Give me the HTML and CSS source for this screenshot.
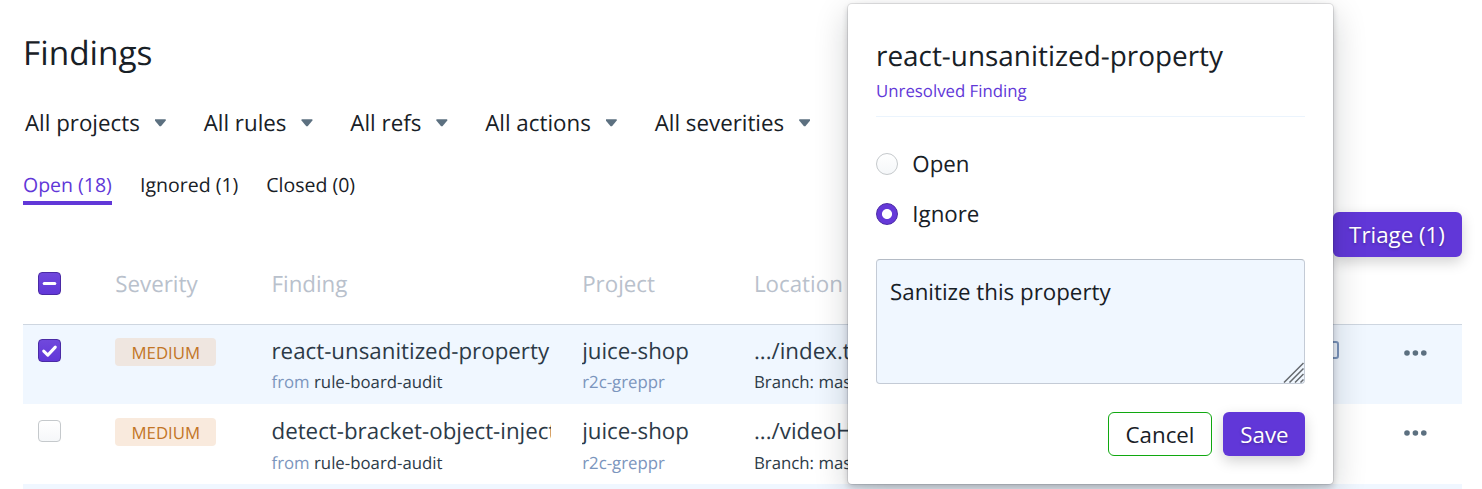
FILE: index.html
```html
<!DOCTYPE html>
<html lang="en">
<head>
<meta charset="utf-8">
<title>Findings</title>
<link rel="stylesheet" href="styles.css">
</head>
<body>
<main class="page">
  <h1 class="page-title">Findings</h1>
  <div class="filters">
    <div class="filter">All projects<i class="caret"></i></div>
    <div class="filter">All rules<i class="caret"></i></div>
    <div class="filter">All refs<i class="caret"></i></div>
    <div class="filter">All actions<i class="caret"></i></div>
    <div class="filter">All severities<i class="caret"></i></div>
  </div>
  <nav class="tabs">
    <a class="tab tab-active">Open (18)</a>
    <a class="tab">Ignored (1)</a>
    <a class="tab">Closed (0)</a>
  </nav>
  <div class="toolbar"><button class="btn btn-primary triage">Triage (1)</button></div>
  <section class="table">
    <div class="row head">
      <span class="check check-on"><svg viewBox="0 0 23 23"><path d="M6.2 11.5h10.6" stroke="#fff" stroke-width="3" stroke-linecap="round"/></svg></span>
      <span>Severity</span><span>Finding</span><span>Project</span><span>Location</span>
    </div>
    <div class="row item selected">
      <span class="check check-on"><svg viewBox="0 0 23 23"><path d="M5.7 12.1l4.1 4 7.5-8" fill="none" stroke="#fff" stroke-width="3" stroke-linecap="round" stroke-linejoin="round"/></svg></span>
      <span class="badge">MEDIUM</span>
      <div class="cell"><div class="main">react-unsanitized-property</div><div class="sub"><span class="muted">from</span> rule-board-audit</div></div>
      <div class="cell"><div class="main">juice-shop</div><div class="sub muted">r2c-greppr</div></div>
      <div class="cell"><div class="main">.../index.ts</div><div class="sub">Branch: master</div></div>
      <svg class="copy" viewBox="0 0 18 18"><rect x="1" y="1" width="16" height="16" rx="2" fill="none" stroke="#7b95bd" stroke-width="2"/></svg>
      <svg class="more" viewBox="0 0 23 6"><g fill="#5c7080"><circle cx="3" cy="3" r="2.8"/><circle cx="11.4" cy="3" r="2.8"/><circle cx="19.8" cy="3" r="2.8"/></g></svg>
    </div>
    <div class="row item second">
      <span class="check"></span>
      <span class="badge">MEDIUM</span>
      <div class="cell"><div class="main">detect-bracket-object-injection</div><div class="sub"><span class="muted">from</span> rule-board-audit</div></div>
      <div class="cell"><div class="main">juice-shop</div><div class="sub muted">r2c-greppr</div></div>
      <div class="cell"><div class="main">.../videoHandler.ts</div><div class="sub">Branch: master</div></div>
      <span></span>
      <svg class="more" viewBox="0 0 23 6"><g fill="#5c7080"><circle cx="3" cy="3" r="2.8"/><circle cx="11.4" cy="3" r="2.8"/><circle cx="19.8" cy="3" r="2.8"/></g></svg>
    </div>
    <div class="row item selected"></div>
  </section>
</main>
<aside class="popover">
  <h2 class="popover-title">react-unsanitized-property</h2>
  <div class="popover-sub">Unresolved Finding</div>
  <label class="option"><span class="radio"></span>Open</label>
  <label class="option"><span class="radio radio-on"></span>Ignore</label>
  <div class="note">Sanitize this property
    <svg class="grip" viewBox="0 0 21 21"><path d="M1 20.5L20.5 1M6.5 20.5l14-14M12 20.5l8.5-8.5M17.5 20.5l3-3" stroke="#64686d" stroke-width="1.5"/></svg>
  </div>
  <div class="actions"><button class="btn btn-outline">Cancel</button><button class="btn btn-primary save">Save</button></div>
</aside>
</body>
</html>
```
FILE: styles.css
```css
* { box-sizing: border-box; }
body {
  position: relative;
  margin: 0;
  height: 489px;
  overflow: hidden;
  background: #fff;
  color: #182026;
  font: 22.32px/30px "Open Sans", "Noto Sans", sans-serif;
  text-rendering: geometricPrecision;
  white-space: nowrap;
}
h1, h2 { margin: 0; font-weight: 400; }
.page { height: 489px; padding: 0 20px 0 23px; overflow: hidden; }
.page-title { height: 104px; font-size: 33.4px; line-height: 104px; }
.filters { display: flex; gap: 37.7px; height: 37px; padding-left: 2px; line-height: 37px; }
.filter { display: flex; align-items: center; gap: 14.8px; }
.caret {
  width: 11.4px;
  height: 7.4px;
  margin-top: 1px;
  background: #5c7080;
  clip-path: polygon(4% 0, 96% 0, 100% 12%, 56% 95%, 44% 95%, 0 12%);
}
.tabs { display: flex; gap: 28px; height: 64px; padding-top: 23px; font-size: 19.5px; }
.tab { height: 41px; line-height: 41px; }
.tab-active { width: 89px; border-bottom: 4px solid #6137d8; color: #6137d8; }
.toolbar { display: flex; justify-content: flex-end; padding-top: 7px; }
.btn {
  height: 44px;
  padding: 2px 0 0;
  border: 0;
  border-radius: 6px;
  font: inherit;
  color: #182026;
}
.btn-primary {
  background: #6137d8;
  color: #fff;
  text-shadow: 0 1px 3px rgba(0, 0, 0, .3);
  box-shadow: 0 5px 14px rgba(0, 0, 0, .18);
}
.btn-outline { width: 104px; border: 1.4px solid #10a810; background: #fff; }
.save { width: 82px; padding-left: 1px; }
.triage { width: 129px; height: 45px; padding: 0 1px 0 0; }

.row {
  display: grid;
  grid-template-columns: 77.3px 156.2px 310.7px 171.8px 562px 88px 1fr;
  align-items: start;
  padding-left: 15px;
}
.head {
  height: 68px;
  padding-top: 12px;
  border-bottom: 1px solid #ced6e0;
  color: #b9c1cc;
}
.check {
  width: 23px;
  height: 23px;
  margin-top: 3px;
  border: 1px solid #c5c9cc;
  border-radius: 4px;
  background: linear-gradient(#fff, #f5f7f9);
}
.check svg { display: block; width: 23px; height: 23px; margin: -1px; }
.check-on { border-color: #4a2aa5; background: linear-gradient(#7048dc, #6137d8); }
.item { height: 79px; color: #2c3a47; }
.selected { background: #f0f7ff; }
.item .check { margin-top: 14px; }
.second { height: 80px; }
.second .check { height: 22px; margin-top: 16px; }
.badge {
  width: 101px;
  height: 28px;
  margin-top: 13px;
  border-radius: 4px;
  background: #f9eadd;
  color: #c27526;
  font-size: 16.8px;
  line-height: 29px;
  text-align: center;
}
.selected .badge { background: #efe6e0; }
.second .badge { margin-top: 14px; }
.cell { padding-top: 10px; }
.second .cell { padding-top: 11px; }
.main { width: 279.5px; height: 32px; line-height: 32px; overflow: hidden; }
.sub { height: 30px; font-size: 16.8px; line-height: 30px; }
.second .sub { line-height: 32px; }
.muted { color: #7b95bd; }
.copy { width: 18px; height: 18px; margin-top: 16px; margin-left: 5.5px; }
.more { width: 23px; height: 6px; margin-top: 25px; }
.second .more { margin-top: 26px; }

.popover {
  position: absolute;
  left: 848px;
  top: 4px;
  width: 485px;
  height: 480px;
  padding: 34px 28px 28px;
  border-radius: 4px;
  background: #fff;
  box-shadow: 0 0 0 1px rgba(16, 22, 26, .1), 0 3px 6px rgba(16, 22, 26, .2), 0 11px 34px rgba(16, 22, 26, .2);
}
.popover-title { height: 36px; font-size: 27.9px; line-height: 36px; }
.popover-sub {
  height: 43px;
  margin-bottom: 21.5px;
  border-bottom: 1px solid #ebf4fd;
  color: #6137d8;
  font-size: 16.8px;
  line-height: 34px;
}
.option { display: flex; align-items: center; gap: 14.3px; height: 50.5px; }
.radio {
  width: 22px;
  height: 22px;
  border: 1px solid #c5c9cc;
  border-radius: 50%;
  background: linear-gradient(#fff, #f5f7f9);
}
.radio-on { border-color: #4a2aa5; background: radial-gradient(circle, #fff 0 4.6px, #6539d8 5.4px); }
.note {
  position: relative;
  height: 125px;
  margin-top: 19.5px;
  padding: 17px 13px;
  border: 1px solid #c4cbd6;
  border-top-color: #b4bbc5;
  border-radius: 4px;
  background: #f0f7ff;
}
.grip { position: absolute; right: 0; bottom: 0; width: 21px; height: 21px; }
.actions { display: flex; justify-content: flex-end; gap: 11px; margin-top: 28px; }
```
